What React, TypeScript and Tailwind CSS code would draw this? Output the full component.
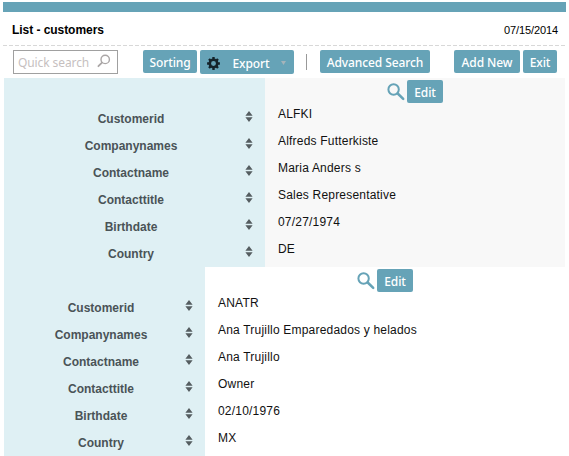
import type { ReactNode } from "react";

const fields = ["Customerid", "Companynames", "Contactname", "Contacttitle", "Birthdate", "Country"];

const records = [
  {
    values: ["ALFKI", "Alfreds Futterkiste", "Maria Anders s", "Sales Representative", "07/27/1974", "DE"],
    labelWidth: "w-[261px]",
    background: "bg-[#f8f8f8]",
  },
  {
    values: ["ANATR", "Ana Trujillo Emparedados y helados", "Ana Trujillo", "Owner", "02/10/1976", "MX"],
    labelWidth: "w-[201px]",
    background: "bg-white",
  },
];

function Button({ children, className }: { children: ReactNode; className: string }) {
  return (
    <button
      className={`flex shrink-0 items-center justify-center whitespace-nowrap rounded-[2px] bg-[#66a3b7] pt-[2px] font-['Noto_Sans',sans-serif] text-[12px] font-medium leading-[21px] tracking-[-0.1px] text-white ${className}`}
    >
      {children}
    </button>
  );
}

function SortArrows() {
  return (
    <svg width="8" height="11" viewBox="0 0 8 11" className="shrink-0" fill="#555d60">
      <path d="M4 0 7.6 4.8H.4ZM.4 6.2h7.2L4 11Z" />
    </svg>
  );
}

function Gear() {
  return (
    <svg width="13" height="13" viewBox="0 0 13 13" className="shrink-0">
      <g stroke="#14232a" strokeWidth="2.4">
        <path d="M6.5 .1v2.6M6.5 10.3v2.6M.1 6.5h2.6M10.3 6.5h2.6M2 2l1.8 1.8M9.2 9.2 11 11M2 11l1.8-1.8M9.2 3.8 11 2" />
      </g>
      <circle cx="6.5" cy="6.5" r="3.7" fill="none" stroke="#14232a" strokeWidth="2.5" />
    </svg>
  );
}

function Magnifier() {
  return (
    <svg width="18" height="18" viewBox="0 0 18 18" className="shrink-0" fill="none" stroke="#66a3b7">
      <circle cx="6.6" cy="6.5" r="5.2" strokeWidth="2" />
      <path d="m10.7 10.5 5.5 5.3" strokeWidth="2.5" strokeLinecap="round" />
    </svg>
  );
}

export default function App() {
  return (
    <div className="flex h-[456px] w-[569px] flex-col overflow-hidden bg-white pl-[3px] pr-[3px] pt-[2px] font-['Liberation_Sans',Arial,sans-serif]">
      <div className="h-[10px] shrink-0 bg-[#66a3b7]" />
      <header className="flex h-[33px] shrink-0 items-center justify-between pl-[9px] pr-[8px] pt-[3px] text-black">
        <h1 className="text-[12px] font-bold tracking-[-0.05px]">List - customers</h1>
        <span className="text-[11px] tracking-[-0.1px]">07/15/2014</span>
      </header>
      <svg width="563" height="1" className="shrink-0">
        <path d="M0 .5h563" stroke="#d8d8d8" strokeDasharray="4 2" />
      </svg>
      <div className="flex h-[32px] shrink-0 items-start pl-[10px] pr-[9px] pt-[4px]">
        <div className="flex h-[24px] w-[105px] items-center justify-between border border-[#a0a0a0] pl-[4px] pr-[6px]">
          <span className="whitespace-nowrap pt-px font-['Noto_Sans',sans-serif] text-[12px] tracking-[-0.1px] text-[#c6bfbf]">Quick search</span>
          <svg width="14" height="14" viewBox="0 0 14 14" fill="none" stroke="#aaa6a6" className="-mt-[2px] shrink-0">
            <circle cx="8.2" cy="5.4" r="4.2" strokeWidth="1.4" />
            <path d="M5 8.7 1.4 12.2" strokeWidth="1.8" strokeLinecap="round" />
          </svg>
        </div>
        <Button className="ml-[25px] h-[23px] w-[54px]">Sorting</Button>
        <Button className="ml-[3px] h-[24px] w-[94px]">
          <Gear />
          <span className="ml-[12px]">Export</span>
          <svg width="5" height="4" viewBox="0 0 5 4" className="ml-[11px] mr-px shrink-0">
            <path d="M0 0h5L2.5 4Z" fill="#a5b4ba" />
          </svg>
        </Button>
        <div className="ml-[12px] mt-[4px] h-[16px] w-px bg-[#999]" />
        <Button className="ml-[13px] h-[23px] w-[110px]">Advanced Search</Button>
        <Button className="ml-auto h-[23px] w-[66px]">Add New</Button>
        <Button className="ml-[3px] h-[23px] w-[34px]">Exit</Button>
      </div>
      <main className="ml-px w-[561px]">
        {records.map((record) => (
          <section key={record.values[0]} className={`flex h-[189px] ${record.background}`}>
            <div className={`flex shrink-0 flex-col bg-[#dff0f4] pt-[27px] ${record.labelWidth}`}>
              {fields.map((field) => (
                <div key={field} className="flex h-[27px] shrink-0 items-center pl-[13px] pr-[12px]">
                  <span className="flex-1 text-center text-[12px] font-bold text-[#4a5357]">{field}</span>
                  <div className="-mt-[5px]">
                    <SortArrows />
                  </div>
                </div>
              ))}
            </div>
            <div className="min-w-0 flex-1">
              <div className="flex h-[22px] items-start justify-center pt-[2px]">
                <div className="mt-[3px]">
                  <Magnifier />
                </div>
                <Button className="ml-[2px] h-[23px] w-[36px]">Edit</Button>
              </div>
              {record.values.map((value) => (
                <div key={value} className="flex h-[27px] items-center pl-[13px] text-[12px] tracking-[0.2px] text-[#111]">
                  {value}
                </div>
              ))}
            </div>
          </section>
        ))}
      </main>
    </div>
  );
}
